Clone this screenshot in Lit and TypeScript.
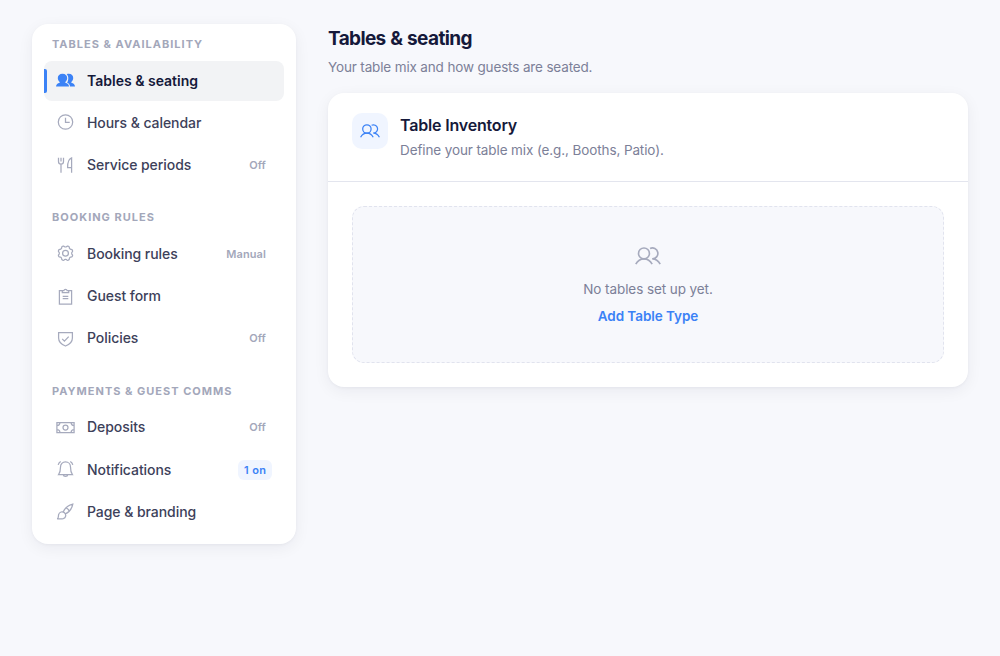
import { LitElement, html, css, svg, nothing } from "lit";
import { customElement, property } from "lit/decorators.js";

// Scalloped gear outline with eight rounded teeth.
const gearPath = () => {
  const points: string[] = [];
  for (let i = 0; i < 96; i++) {
    const a = (i / 96) * Math.PI * 2;
    const wave = -Math.cos(8 * a);
    const r = 6.85 + 0.65 * Math.sign(wave) * Math.pow(Math.abs(wave), 0.5);
    points.push(`${(9.5 + r * Math.cos(a)).toFixed(2)} ${(9.2 + r * Math.sin(a)).toFixed(2)}`);
  }
  return `M${points.join("L")}Z`;
};

const icons: Record<string, { box: number; body: unknown }> = {
  users: {
    box: 20,
    body: svg`<circle cx="6.9" cy="8" r="4.2"/><path d="M.6 16.2C2 13.700 4.300 12.200 6.900 12.200s4.900 1.500 6.300 4M11.600 4.200A4.200 4.200 0 1 1 13.300 12.200c2.600 0 4.700 1.500 6.100 4"/>`,
  },
  usersFill: {
    box: 19,
    body: svg`<g fill="currentColor" stroke="none"><path d="M6.500 2.800c2.900 0 4.700 1.700 4.700 4.200 0 1.700-.8 3.100-1.900 4v.7c2.200.6 3.700 1.600 3.800 3.900H0c.1-2.300 1.600-3.300 3.700-3.900V11c-1.100-.9-1.900-2.300-1.900-4 0-2.500 1.800-4.200 4.700-4.200z"/><path d="M10.700 3.200c.6-.3 1.300-.4 2-.4 2.900 0 4.500 1.700 4.500 4.200 0 1.700-.8 3.100-1.900 4v.7c2.200.6 3.600 1.600 3.700 3.900h-5c-.1-2-1-3.200-2.900-3.900.8-1.100 1.200-2.900 1.200-4.700 0-1.600-.6-2.900-1.600-3.800z"/></g>`,
  },
  clock: { box: 19, body: svg`<circle cx="9.500" cy="9" r="7.200"/><path d="M9.500 4.700v4.700h4.200"/>` },
  fork: {
    box: 19,
    body: svg`<path d="M2.500 1.800v3.600c0 1.700 1 2.700 2.500 2.700s2.500-1 2.500-2.700V1.800M5 1.800v3.600M5 8.100v8.600M15.600 16.700V1.800c-2.700.8-4 4.700-4 9.700h4"/>`,
  },
  gear: { box: 19, body: svg`<circle cx="9.500" cy="9.200" r="2.900"/><path stroke-linejoin="round" d=${gearPath()}/>` },
  clipboard: {
    box: 19,
    body: svg`<path d="M6.300 3.500H3.400v13.500h12.200V3.500h-2.900M6.300 5.500V3.500h1.600c.3-1.500 2.900-1.500 3.200 0h1.600v2zM6.700 9.300h5.600M6.700 11.700h5.600"/>`,
  },
  shield: {
    box: 19,
    body: svg`<path d="M2.600 3.600h13.800v5.300c0 3.700-2.600 6.400-6.900 8.100-4.300-1.700-6.900-4.400-6.900-8.100zM6.200 9.900l2.200 2.200 4.300-4.500"/>`,
  },
  money: {
    box: 19,
    body: svg`<path d="M.9 4.500h17.200v10.100H.9zM.9 7.500c1.800 0 3-1.200 3-3M15.100 4.500c0 1.800 1.200 3 3 3M.9 11.600c1.800 0 3 1.200 3 3M15.100 14.600c0-1.800 1.200-3 3-3"/><circle cx="9.500" cy="9.550" r="2.500"/>`,
  },
  bell: {
    box: 19,
    body: svg`<path d="M4.500 7c0-2.900 2-5.100 5-5.100s5 2.200 5 5.100c0 4.200.8 6 1.900 7.500H2.600c1.100-1.500 1.900-3.300 1.900-7.500zM7.200 14.600c.3 2.500 4.300 2.500 4.600 0M2.200 4.800c.4-1.400 1.300-2.500 2.500-3.300M16.800 4.800c-.4-1.400-1.300-2.500-2.500-3.300"/>`,
  },
  brush: {
    box: 19,
    body: svg`<path d="M1.200 16.900c1.600-.8 1-2.500 1.400-4.300.6-2.700 3.900-3.700 5.900-1.800s1.500 5.200-1.200 5.900c-1.700.4-3.800.2-6.100.2zM7.200 10c1.500-3.700 4.900-6.700 9.600-7.900-.9 4.800-3.900 8.300-7.700 9.900M10.400 6.200c1.300.4 2.100 1.300 2.600 2.600"/>`,
  },
};

@customElement("ui-icon")
class UiIcon extends LitElement {
  @property() name = "users";
  static styles = css`
    :host { display: block; flex: none; }
    .icon { display: block; width: 100%; height: 100%; overflow: visible; fill: none; stroke: currentColor; stroke-width: 1.25; }
  `;
  render() {
    const icon = icons[this.name];
    return html`<svg class="icon" viewBox="0 0 ${icon.box} ${icon.box}" aria-hidden="true">${icon.body}</svg>`;
  }
}

interface Item { icon: string; label: string; status?: string; active?: boolean; on?: boolean }

const groups: { title: string; items: Item[] }[] = [
  {
    title: "TABLES & AVAILABILITY",
    items: [
      { icon: "usersFill", label: "Tables & seating", active: true },
      { icon: "clock", label: "Hours & calendar" },
      { icon: "fork", label: "Service periods", status: "Off" },
    ],
  },
  {
    title: "BOOKING RULES",
    items: [
      { icon: "gear", label: "Booking rules", status: "Manual" },
      { icon: "clipboard", label: "Guest form" },
      { icon: "shield", label: "Policies", status: "Off" },
    ],
  },
  {
    title: "PAYMENTS & GUEST COMMS",
    items: [
      { icon: "money", label: "Deposits", status: "Off" },
      { icon: "bell", label: "Notifications", status: "1 on", on: true },
      { icon: "brush", label: "Page & branding" },
    ],
  },
];

@customElement("app-root")
class AppRoot extends LitElement {
  static styles = css`
    :host { display: block; min-height: 656px; box-sizing: border-box; padding: 24px 32px; background: #f7f8fc; font-family: Inter, sans-serif; color: #15193a; }
    * { box-sizing: border-box; }
    h1, h2, h3, p { margin: 0; }
    .layout { display: grid; grid-template-columns: 264px 1fr; gap: 32px; align-items: start; }
    .nav, .card { background: #fff; border-radius: 16px; box-shadow: 0 4px 16px rgba(20, 25, 50, .06), 0 1px 3px rgba(20, 25, 50, .04); }
    .nav { display: flex; flex-direction: column; gap: 24px; padding: 12px; height: 520px; }
    .group { display: flex; flex-direction: column; gap: 2px; }
    .group:last-child { margin-top: .15px; }
    .title { padding: 0 8px; margin-bottom: 6px; font-size: 11px; line-height: 16.5px; font-weight: 700; letter-spacing: 1px; color: #a3a7ba; white-space: nowrap; }
    .item { display: flex; align-items: center; gap: 12px; width: 240px; height: 40.27px; padding: 0 12px; border: 0; border-radius: 8px; background: none; font: 500 14px/21px Inter, sans-serif; letter-spacing: -.06px; color: #3d415a; text-align: left; position: relative; }
    .item ui-icon { width: 19px; height: 19px; color: #a6aabd; }
    .label { flex: 1; padding-bottom: 1px; white-space: nowrap; }
    .active { background: #f2f3f5; color: #15193a; font-weight: 600; letter-spacing: 0; }
    .active ui-icon { color: #3b82f6; }
    .active::before { content: ""; position: absolute; left: 0; top: 8px; bottom: 8px; width: 3px; border-radius: 0 2px 2px 0; background: #3b82f6; }
    .status { padding: 2px 6px; border-radius: 6px; font-size: 11px; line-height: 16px; font-weight: 600; letter-spacing: .1px; color: #a3a7ba; }
    .on { margin-top: .4px; background: #f0f5ff; color: #3b82f6; word-spacing: .8px; }
    .heading { padding-top: 1px; font-size: 19px; line-height: 28px; font-weight: 700; letter-spacing: -.63px; word-spacing: .8px; }
    .sub { margin-top: 4px; font-size: 13.5px; line-height: 20px; letter-spacing: -.15px; color: #7c8098; }
    .card { margin-top: 16px; }
    .head { display: flex; gap: 12px; height: 89px; padding: 20px 24px; border-bottom: 1px solid #e3e5ee; }
    .badge { display: grid; place-items: center; width: 36px; height: 36px; border-radius: 10px; background: #f0f5ff; color: #3b82f6; }
    .badge ui-icon { width: 20px; height: 20px; }
    .name { font-size: 16px; line-height: 24px; font-weight: 600; letter-spacing: -.18px; }
    .desc { margin-top: 3px; font-size: 13.5px; line-height: 20px; letter-spacing: -.11px; color: #7c8098; }
    .body { padding: 24px; }
    .empty { display: flex; flex-direction: column; align-items: center; height: 157px; padding-top: 36px; border: 1px dashed #e1e3ee; border-radius: 12px; background: #f7f8fc; font-size: 13.5px; line-height: 20px; letter-spacing: -.08px; color: #7c8098; }
    .empty ui-icon { width: 26px; height: 26px; margin-bottom: 10px; color: #a6aabd; }
    .add { margin-top: 7px; padding: 0; border: 0; background: none; font: 600 13.5px/20px Inter, sans-serif; letter-spacing: -.05px; color: #3b82f6; }
  `;
  render() {
    return html`<div class="layout">
      <nav class="nav">
        ${groups.map((g) => html`<div class="group">
          <h3 class="title">${g.title}</h3>
          ${g.items.map((i) => html`<button class="item ${i.active ? "active" : ""}">
            <ui-icon name=${i.icon}></ui-icon><span class="label">${i.label}</span>
            ${i.status ? html`<span class="status ${i.on ? "on" : ""}">${i.status}</span>` : nothing}
          </button>`)}
        </div>`)}
      </nav>
      <main>
        <h1 class="heading">Tables &amp; seating</h1>
        <p class="sub">Your table mix and how guests are seated.</p>
        <section class="card">
          <header class="head">
            <div class="badge"><ui-icon name="users"></ui-icon></div>
            <div>
              <h2 class="name">Table Inventory</h2>
              <p class="desc">Define your table mix (e.g., Booths, Patio).</p>
            </div>
          </header>
          <div class="body">
            <div class="empty">
              <ui-icon name="users"></ui-icon>
              <p>No tables set up yet.</p>
              <button class="add">Add Table Type</button>
            </div>
          </div>
        </section>
      </main>
    </div>`;
  }
}
